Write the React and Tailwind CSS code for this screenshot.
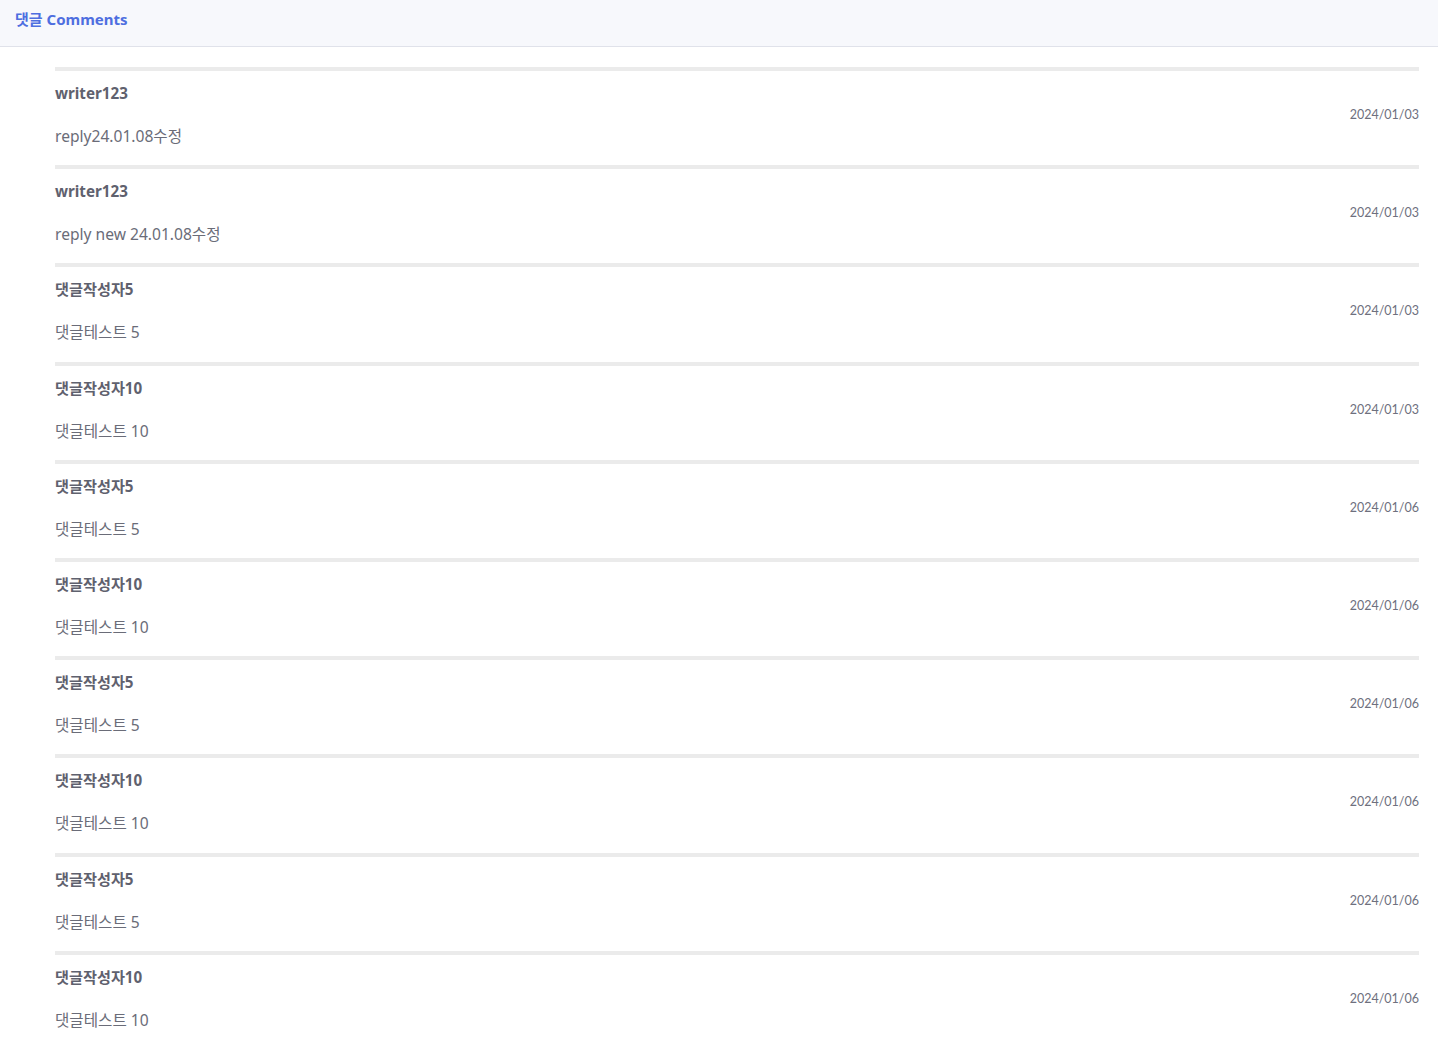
import React from "react";

const comments = [
  { writer: "writer123", content: "reply24.01.08수정", date: "2024/01/03" },
  { writer: "writer123", content: "reply new 24.01.08수정", date: "2024/01/03" },
  { writer: "댓글작성자5", content: "댓글테스트 5", date: "2024/01/03" },
  { writer: "댓글작성자10", content: "댓글테스트 10", date: "2024/01/03" },
  { writer: "댓글작성자5", content: "댓글테스트 5", date: "2024/01/06" },
  { writer: "댓글작성자10", content: "댓글테스트 10", date: "2024/01/06" },
  { writer: "댓글작성자5", content: "댓글테스트 5", date: "2024/01/06" },
  { writer: "댓글작성자10", content: "댓글테스트 10", date: "2024/01/06" },
  { writer: "댓글작성자5", content: "댓글테스트 5", date: "2024/01/06" },
  { writer: "댓글작성자10", content: "댓글테스트 10", date: "2024/01/06" },
];

const App = () => {
  return (
    <div
      className="min-h-screen bg-white"
      style={{ fontFamily: "'Noto Sans', 'Noto Sans CJK KR', sans-serif" }}
    >
      {/* HEADER */}
      <div className="h-[47px] bg-[#f7f8fc] border-b border-[#e0e2ea] px-[15px] pt-[9px]">
        <h6 className="text-[15px] leading-[20px] font-bold text-[#4e6ee0]">댓글 Comments</h6>
      </div>

      {/* COMMENT LIST */}
      <div className="mt-[20px] ml-[55px] mr-[19px]">
        {comments.map((c, i) => (
          <div
            key={i}
            className="border-t-4 border-[#ebebeb] pt-[12px] pb-[19.2px]"
          >
            <div className="h-[20px] leading-[20px] text-[15.2px] font-bold text-[#5f616e]">
              {c.writer}
            </div>
            <div
              className="mt-[4px] h-[16px] leading-[16px] flex justify-end text-[12.5px] text-[#6e707e]"
              style={{ fontFamily: "Lato, 'Noto Sans CJK KR', sans-serif" }}
            >
              {c.date}
            </div>
            <div className="mt-[3px] h-[20px] leading-[20px] text-[15.6px] text-[#6a6c78]">
              {c.content}
            </div>
          </div>
        ))}
      </div>
    </div>
  );
};

export default App;
